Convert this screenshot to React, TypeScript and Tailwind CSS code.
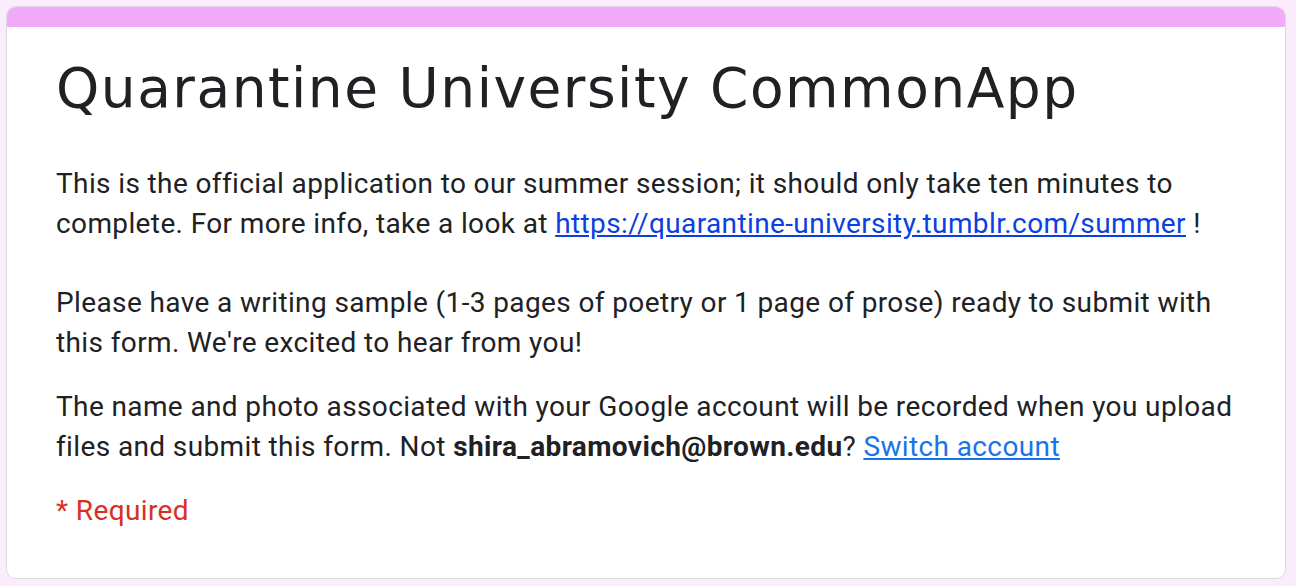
export default function App() {
	return (
		<div className="min-h-[586px] bg-[#fbecfd] pb-[7px] pl-[6px] pr-[10px] pt-[6px]">
			<div className="overflow-hidden rounded-[10px] border border-[#dadce0] bg-white">
				<div className="-mx-px -mt-px h-[21px] bg-[#f0aaf8]" />
				<div className="pb-[47px] pl-[49px] pr-[40px] pt-[29px] font-['Roboto',sans-serif] text-[28px] leading-[40px] tracking-[0.38px] text-[#202124]">
					<h1 className="font-['DejaVu_Sans',sans-serif] text-[55px] leading-[64px] tracking-[1.5px] text-[#202124]">
						Quarantine University CommonApp
					</h1>
					<p className="mt-[44px]">
						This is the official application to our summer session; it should only take ten minutes to
						complete. For more info, take a look at{" "}
						<a href="#" className="text-[#0b3fe0] underline">
							https://quarantine-university.tumblr.com/summer
						</a>{" "}
						!
					</p>
					<p className="mt-[39px]">
						Please have a writing sample (1-3 pages of poetry or 1 page of prose) ready to submit with
						this form. We're excited to hear from you!
					</p>
					<p className="mt-[24px]">
						The name and photo associated with your Google account will be recorded when you upload
						files and submit this form. Not <b>shira_abramovich@brown.edu</b>?{" "}
						<a href="#" className="text-[#1a73e8] underline">
							Switch account
						</a>
					</p>
					<p className="mt-[24px] text-[#d93025]">* Required</p>
				</div>
			</div>
		</div>
	);
}
